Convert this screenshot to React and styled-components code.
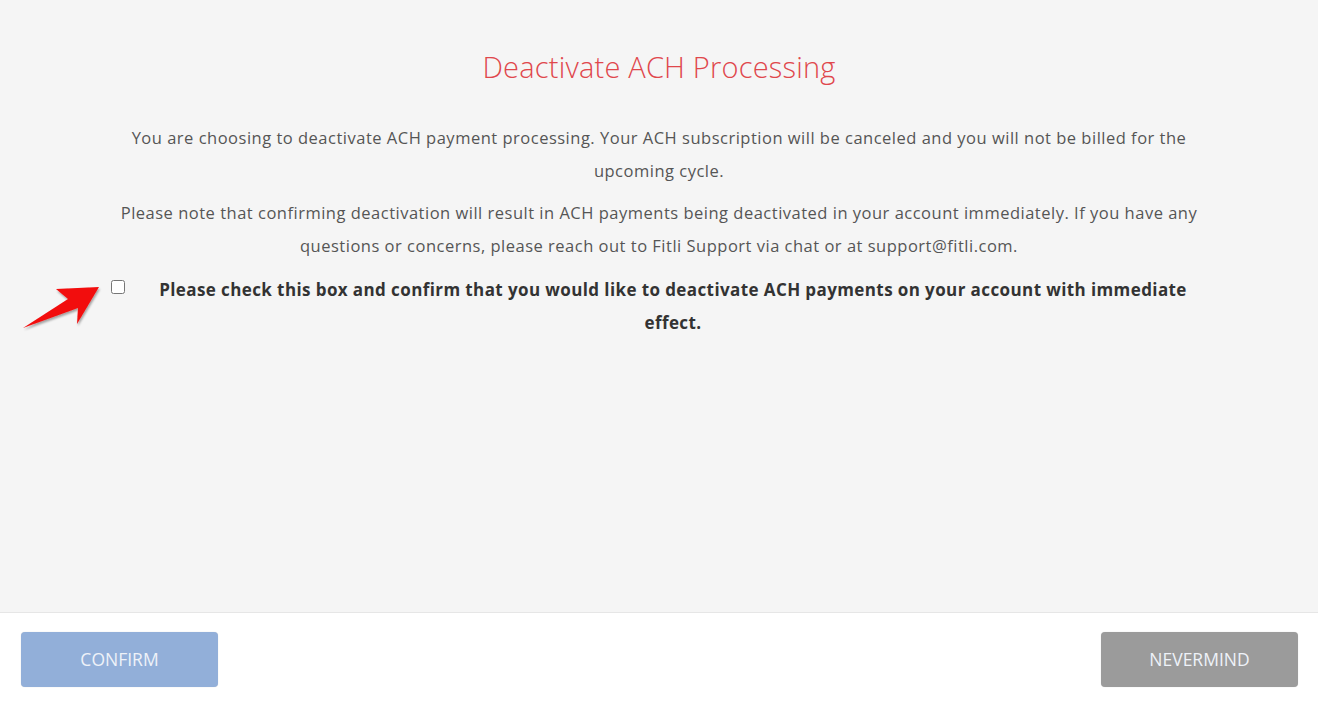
import React from 'react'
import styled, { createGlobalStyle } from 'styled-components'

const GlobalStyle = createGlobalStyle`
  html, body {
    margin: 0;
    padding: 0;
    background: #ffffff;
    font-family: "Open Sans", "Noto Sans", sans-serif;
  }
  * { box-sizing: border-box; }
`

const Page = styled.div`
  width: 1318px;
  height: 705px;
  display: flex;
  flex-direction: column;
`

const Body = styled.main`
  flex: 1;
  background: #f5f5f5;
  border-bottom: 1px solid #e6e6e6;
  display: flex;
  flex-direction: column;
  align-items: center;
  padding: 47px 100px 0;
`

const Title = styled.h1`
  margin: 0 0 35px;
  font-size: 29px;
  font-weight: 300;
  color: #e0474c;
  letter-spacing: 0.2px;
`

const Text = styled.p`
  margin: 0 0 9px;
  max-width: ${p => p.$max}px;
  text-align: center;
  font-size: 16.5px;
  letter-spacing: 0.5px;
  line-height: 33px;
  color: #555;
`

const CheckRow = styled.div`
  position: relative;
  width: 100%;
  display: flex;
  align-items: flex-start;
  margin-top: 2px;
  padding-left: 11px;
`

const Box = styled.input`
  margin: 7px 0 0;
  width: 14px;
  height: 14px;
  flex-shrink: 0;
`

const Label = styled.label`
  flex: 1;
  padding: 0 17px 0 20px;
  text-align: center;
  font-size: 17px;
  letter-spacing: 0.4px;
  font-weight: 700;
  line-height: 33px;
  color: #333;
`

const Arrow = styled.svg`
  position: absolute;
  left: -82px;
  top: 10px;
`

const Footer = styled.footer`
  height: 92px;
  background: #fff;
  display: flex;
  align-items: center;
  justify-content: space-between;
  padding: 0 20px 0 21px;
`

const Button = styled.button`
  width: 197px;
  height: 55px;
  border: none;
  border-radius: 4px;
  background: ${p => p.$bg};
  color: #eef2f8;
  font-family: inherit;
  font-size: 17.5px;
  text-transform: uppercase;
  box-shadow: 0 0 1px rgba(0,0,0,0.2);
`

export default function App() {
  return (
    <Page>
      <GlobalStyle />
      <Body>
        <Title>Deactivate ACH Processing</Title>
        <Text $max={1090}>
          You are choosing to deactivate ACH payment processing. Your ACH subscription will be canceled and you will not be billed for the upcoming cycle.
        </Text>
        <Text $max={1118}>
          Please note that confirming deactivation will result in ACH payments being deactivated in your account immediately. If you have any questions or concerns, please reach out to Fitli Support via chat or at support@fitli.com.
        </Text>
        <CheckRow>
          <Arrow width="85" height="50" viewBox="18 283 85 50">
            <defs>
              <filter id="sh" x="-20%" y="-20%" width="140%" height="150%">
                <feDropShadow dx="1" dy="2" stdDeviation="1.3" floodColor="#000" floodOpacity="0.35" />
              </filter>
            </defs>
            <path d="M23 328 L68 299 L56 289 L99 287 L77 324 L78 308 Z" fill="#f20d0d" filter="url(#sh)" />
          </Arrow>
          <Box type="checkbox" id="confirm" />
          <Label htmlFor="confirm">
            Please check this box and confirm that you would like to deactivate ACH payments on your account with immediate effect.
          </Label>
        </CheckRow>
      </Body>
      <Footer>
        <Button $bg="#92afd9">Confirm</Button>
        <Button $bg="#9b9b9b">Nevermind</Button>
      </Footer>
    </Page>
  )
}
